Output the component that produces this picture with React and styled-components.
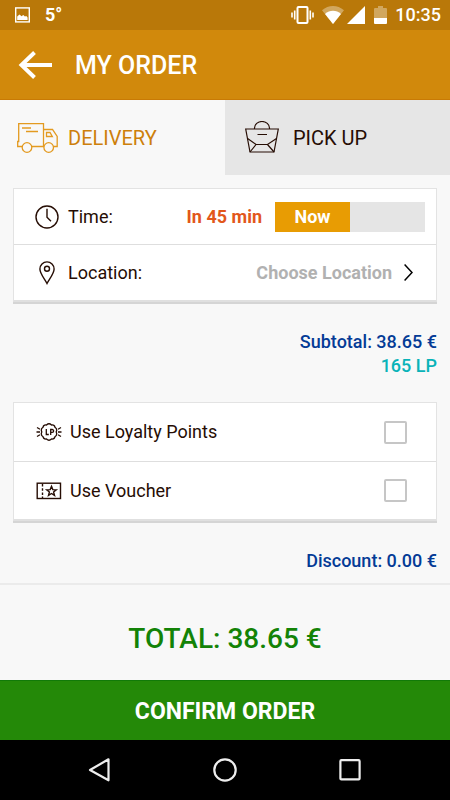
import React, { useState } from "react";
import styled, { createGlobalStyle } from "styled-components";

const GlobalStyle = createGlobalStyle`
  *, *::before, *::after { box-sizing: border-box; }
  body { margin: 0; background: #f8f8f8; }
  body, button, input { font-family: Roboto, "Liberation Sans", sans-serif; }
  button { border: 0; margin: 0; padding: 0; background: none; color: inherit; cursor: pointer; }
  svg { display: block; flex: none; }
`;

const ink = "#260d04";

const Screen = styled.div`
  display: flex;
  flex-direction: column;
  min-height: 100vh;
  background: #f8f8f8;
  color: ${ink};
`;

const StatusBar = styled.div`
  display: flex;
  align-items: center;
  height: 30px;
  padding: 0 9px 0 15px;
  background: #b97809;
  color: #fff;
  font-size: 18px;
  line-height: 30px;
`;

const Temperature = styled.span`
  flex: 1;
  margin-left: 15px;
  font-weight: 700;
`;

const StatusIcons = styled.div`
  display: flex;
  align-items: center;
  gap: 8px;
`;

const NetworkIcons = styled.div`
  display: flex;
  gap: 3px;
  margin-right: 1px;
`;

const Clock = styled.time`
  font-weight: 500;
`;

const AppBar = styled.header`
  display: flex;
  align-items: center;
  gap: 23px;
  height: 70px;
  padding: 0 18px;
  background: #d1890c;
  border-bottom: 1px solid #c87a05;
  color: #fff;
`;

const Title = styled.h1`
  margin: 0;
  padding-top: 2px;
  font-size: 25px;
  line-height: 30px;
  font-weight: 500;
`;

const Tabs = styled.div`
  display: grid;
  grid-template-columns: 1fr 1fr;
`;

const Tab = styled.button`
  display: flex;
  align-items: center;
  gap: ${(p) => p.$gap}px;
  height: 75px;
  padding: 1px 16px 0 ${(p) => p.$inset}px;
  background: ${(p) => (p.$active ? "#f8f8f8" : "#e6e6e6")};
  color: ${(p) => (p.$active ? "#cd7f0b" : ink)};
  font-size: 20px;
`;

const Content = styled.main`
  display: flex;
  flex-direction: column;
  padding: 13px 13px 10px;
`;

const Card = styled.section`
  background: #fff;
  border: 1px solid #e3e3e3;
  border-bottom: 2px solid #e0e0e0;
  box-shadow: 0 2px 0 #d5d5d5;
`;

const Row = styled.div`
  display: flex;
  align-items: center;
  width: 100%;
  min-height: ${(p) => p.$height}px;
  padding: 0 ${(p) => p.$end}px 0 ${(p) => p.$start}px;
  font-size: 18px;
  line-height: 24px;
  text-align: left;

  & + & {
    border-top: ${(p) => p.$rule}px solid ${(p) => (p.$rule > 1 ? "#ececec" : "#dedede")};
  }
`;

const IconSlot = styled.span`
  display: flex;
  justify-content: center;
  width: 26px;
  margin-right: 8px;
`;

const Label = styled.span`
  flex: 1;
`;

const Eta = styled.span`
  margin-right: 13px;
  color: #e2571b;
  font-weight: 700;
`;

const Switch = styled.button`
  display: grid;
  grid-template-columns: 1fr 1fr;
  width: 150px;
  height: 30px;
  background: #e5e5e5;
`;

const SwitchThumb = styled.span`
  grid-column: ${(p) => (p.$on ? 1 : 2)};
  background: #e89c03;
  color: #fff;
  font-size: 18px;
  line-height: 30px;
  font-weight: 700;
`;

const Choice = styled.span`
  margin-right: 12px;
  color: #b1b1b1;
  font-weight: 700;
`;

const Checkbox = styled.input`
  appearance: none;
  width: 23px;
  height: 23px;
  margin: 0;
  border: 2px solid #c6c6c6;
  border-radius: 2px;
  background: #fff;

  &:checked {
    background: #e89c03;
  }
`;

const Summary = styled.div`
  padding: 28px 0 ${(p) => p.$bottom}px;
  color: #043b96;
  font-size: 18px;
  line-height: 24px;
  font-weight: 500;
  text-align: right;
`;

const Points = styled.div`
  color: #09b3b8;
`;

const Total = styled.div`
  display: flex;
  flex: 1;
  align-items: center;
  justify-content: center;
  padding-top: 12px;
  border-top: 2px solid #ebebeb;
  color: #138307;
  font-size: 28px;
  line-height: 32px;
  font-weight: 500;
`;

const Confirm = styled.button`
  height: 60px;
  padding-top: 2px;
  background: #248908;
  border-top: 1px solid #117a08;
  color: #fff;
  font-size: 23px;
  font-weight: 700;
`;

const NavBar = styled.nav`
  display: flex;
  justify-content: space-evenly;
  height: 60px;
  padding: 0 38px;
  background: #000;
`;

const NavButton = styled.button`
  display: grid;
  flex: 1;
  place-items: center;
`;

const Line = ({ w, h, width = 1.4, color = "currentColor", children }) => (
  <svg width={w} height={h} viewBox={`0 0 ${w} ${h}`} fill="none" stroke={color} strokeWidth={width} aria-hidden="true">
    {children}
  </svg>
);

const PictureIcon = () => (
  <Line w={15} h={16}>
    <rect x="0.7" y="0.9" width="13.6" height="14" />
    <path d="M2.2 13V9.5l2.3-2 2 1.8 1.8-1.2 1.6 1.3 1.4-.4 1.3 1.6V13z" fill="currentColor" stroke="none" />
  </Line>
);

const VibrateIcon = () => (
  <Line w={23} h={18} width={2}>
    <rect x="6.5" y="1" width="10" height="16" rx="1" />
    <path d="M3.7 4.5v9M19.3 4.5v9M1 6.5v5M22 6.5v5" strokeWidth="1.6" />
  </Line>
);

const WifiIcon = () => (
  <svg width="22" height="18" viewBox="0 0 22 18" fill="#fff" aria-hidden="true">
    <path d="M0 4.3C6.4-1.4 15.6-1.4 22 4.3L11 18z" opacity=".35" />
    <path d="M3 8C7.6 3.7 14.4 3.7 19 8l-8 10z" />
  </svg>
);

const SignalIcon = () => (
  <svg width="18" height="18" viewBox="0 0 18 18" fill="#fff" aria-hidden="true">
    <path d="M18 0v18H0z" />
  </svg>
);

const BatteryIcon = () => (
  <svg width="13" height="18" viewBox="0 0 13 18" fill="#fff" aria-hidden="true">
    <path d="M4 0h5v2h3q1 0 1 1v9H0V3q0-1 1-1h3z" opacity=".35" />
    <path d="M0 12h13v5q0 1-1 1H1q-1 0-1-1z" />
  </svg>
);

const BackIcon = () => (
  <Line w={34} h={28} width={4}>
    <path d="M34 14H4M16.5 1.5L3.5 14l13 12.5" />
  </Line>
);

const TruckIcon = () => (
  <Line w={42} h={30} width={1.3} color="#e39a20">
    <path d="M5 23.5H.7v-5h1V.7h24.8v22.8H15M26.500 6.500h9l4.700 7v10h-3.700" />
    <path d="M29.500 9.500H33l2.300 4h-5.800zM5 5h9M9 8.500h12" />
    <circle cx="10" cy="24.500" r="4.800" />
    <circle cx="31.700" cy="24.500" r="4.800" />
  </Line>
);

const BagIcon = () => (
  <Line w={34} h={34} width={1.2}>
    <path d="M9.5 8v-1a7.4 6.400 0 0 1 15 0v1M.7 8h32.600L29 31H5z" />
    <path d="M12.500 13.500H22M2.600 17.500l8.400 6h11.500l9-6M11 23.500L5 31M22.500 23.500L29 31" />
  </Line>
);

const ClockIcon = () => (
  <Line w={24} h={24}>
    <circle cx="12" cy="12" r="11" />
    <path d="M12 3.8v8.4l4 4" />
  </Line>
);

const PinIcon = () => (
  <Line w={16} h={24}>
    <path d="M8 22.5C6 18.5.9 12.7.9 8a7.1 7.1 0 0 1 14.2 0C15.1 12.7 10 18.5 8 22.5z" />
    <circle cx="8" cy="7.7" r="2.5" />
  </Line>
);

const ChevronIcon = () => (
  <Line w={9} h={17} width={1.5} color="#000">
    <path d="M.6.6L8 8.5.6 16.4" />
  </Line>
);

const LoyaltyIcon = () => (
  <Line w={26} h={18} width={1.3}>
    <path d="M10.5 2q2.5-2.4 5 0 3-.4 3.5 2.3 2.6 1.7 1.2 4.700 1.400 3-1.200 4.700-.5 2.700-3.500 2.300-2.500 2.400-5 0-3 .4-3.500-2.300-2.600-1.700-1.200-4.700-1.400-3 1.200-4.700Q7.500 1.600 10.500 2z" />
    <path d="M10.3 6v5.5h2.5M14.700 12V6.500h1.500a1.400 1.400 0 0 1 0 2.900h-1.500" />
    <path d="M1 4.500l3 1.700M.5 9H4M1 13.500l3-1.700M25 4.500l-3 1.700M25.500 9H22M25 13.500l-3-1.700" />
  </Line>
);

const VoucherIcon = () => (
  <Line w={26} h={18} width={1.4}>
    <rect x="1.2" y="1.2" width="23.3" height="15.3" />
    <path d="M6.5 2v15" strokeDasharray="2.5 1.7" />
    <path d="M15.5 4.3l1.3 3.3 3.5.2-2.7 2.2.9 3.4-3-1.9-3 1.9.9-3.4-2.7-2.2 3.5-.2z" />
  </Line>
);

export default function App() {
  const [tab, setTab] = useState("delivery");
  const [now, setNow] = useState(true);

  return (
    <Screen>
      <GlobalStyle />
      <StatusBar>
        <PictureIcon />
        <Temperature>5°</Temperature>
        <StatusIcons>
          <VibrateIcon />
          <NetworkIcons>
            <WifiIcon />
            <SignalIcon />
          </NetworkIcons>
          <BatteryIcon />
          <Clock>10:35</Clock>
        </StatusIcons>
      </StatusBar>

      <AppBar>
        <button type="button" aria-label="Back"><BackIcon /></button>
        <Title>MY ORDER</Title>
      </AppBar>

      <Tabs role="tablist">
        <Tab type="button" role="tab" aria-selected={tab === "delivery"} $active={tab === "delivery"} $inset={17} $gap={9} onClick={() => setTab("delivery")}>
          <TruckIcon />
          DELIVERY
        </Tab>
        <Tab type="button" role="tab" aria-selected={tab === "pickup"} $active={tab === "pickup"} $inset={20} $gap={14} onClick={() => setTab("pickup")}>
          <BagIcon />
          PICK UP
        </Tab>
      </Tabs>

      <Content>
        <Card>
          <Row $height={55} $start={20} $end={11} $rule={2}>
            <IconSlot><ClockIcon /></IconSlot>
            <Label>Time:</Label>
            <Eta>In 45 min</Eta>
            <Switch type="button" role="switch" aria-checked={now} onClick={() => setNow(!now)}>
              <SwitchThumb $on={now}>Now</SwitchThumb>
            </Switch>
          </Row>
          <Row as="button" type="button" $height={56} $start={20} $end={23} $rule={2}>
            <IconSlot><PinIcon /></IconSlot>
            <Label>Location:</Label>
            <Choice>Choose Location</Choice>
            <ChevronIcon />
          </Row>
        </Card>

        <Summary $bottom={24}>
          <div>Subtotal: 38.65 €</div>
          <Points>165 LP</Points>
        </Summary>

        <Card>
          <Row as="label" $height={58} $start={22} $end={29} $rule={1}>
            <IconSlot><LoyaltyIcon /></IconSlot>
            <Label>Use Loyalty Points</Label>
            <Checkbox type="checkbox" />
          </Row>
          <Row as="label" $height={58} $start={22} $end={29} $rule={1}>
            <IconSlot><VoucherIcon /></IconSlot>
            <Label>Use Voucher</Label>
            <Checkbox type="checkbox" />
          </Row>
        </Card>

        <Summary $bottom={0}>Discount: 0.00 €</Summary>
      </Content>

      <Total>TOTAL: 38.65 €</Total>
      <Confirm type="button">CONFIRM ORDER</Confirm>

      <NavBar>
        <NavButton type="button" aria-label="Back">
          <Line w={24} h={24} width={2.2} color="#eee"><path d="M20.5 1.3v21L2 12z" strokeLinejoin="round" /></Line>
        </NavButton>
        <NavButton type="button" aria-label="Home">
          <Line w={24} h={24} width={2.2} color="#eee"><circle cx="12" cy="12" r="10.7" /></Line>
        </NavButton>
        <NavButton type="button" aria-label="Recent apps">
          <Line w={24} h={24} width={2.2} color="#eee"><rect x="2.4" y="2.2" width="19.2" height="19.2" rx="1" /></Line>
        </NavButton>
      </NavBar>
    </Screen>
  );
}
